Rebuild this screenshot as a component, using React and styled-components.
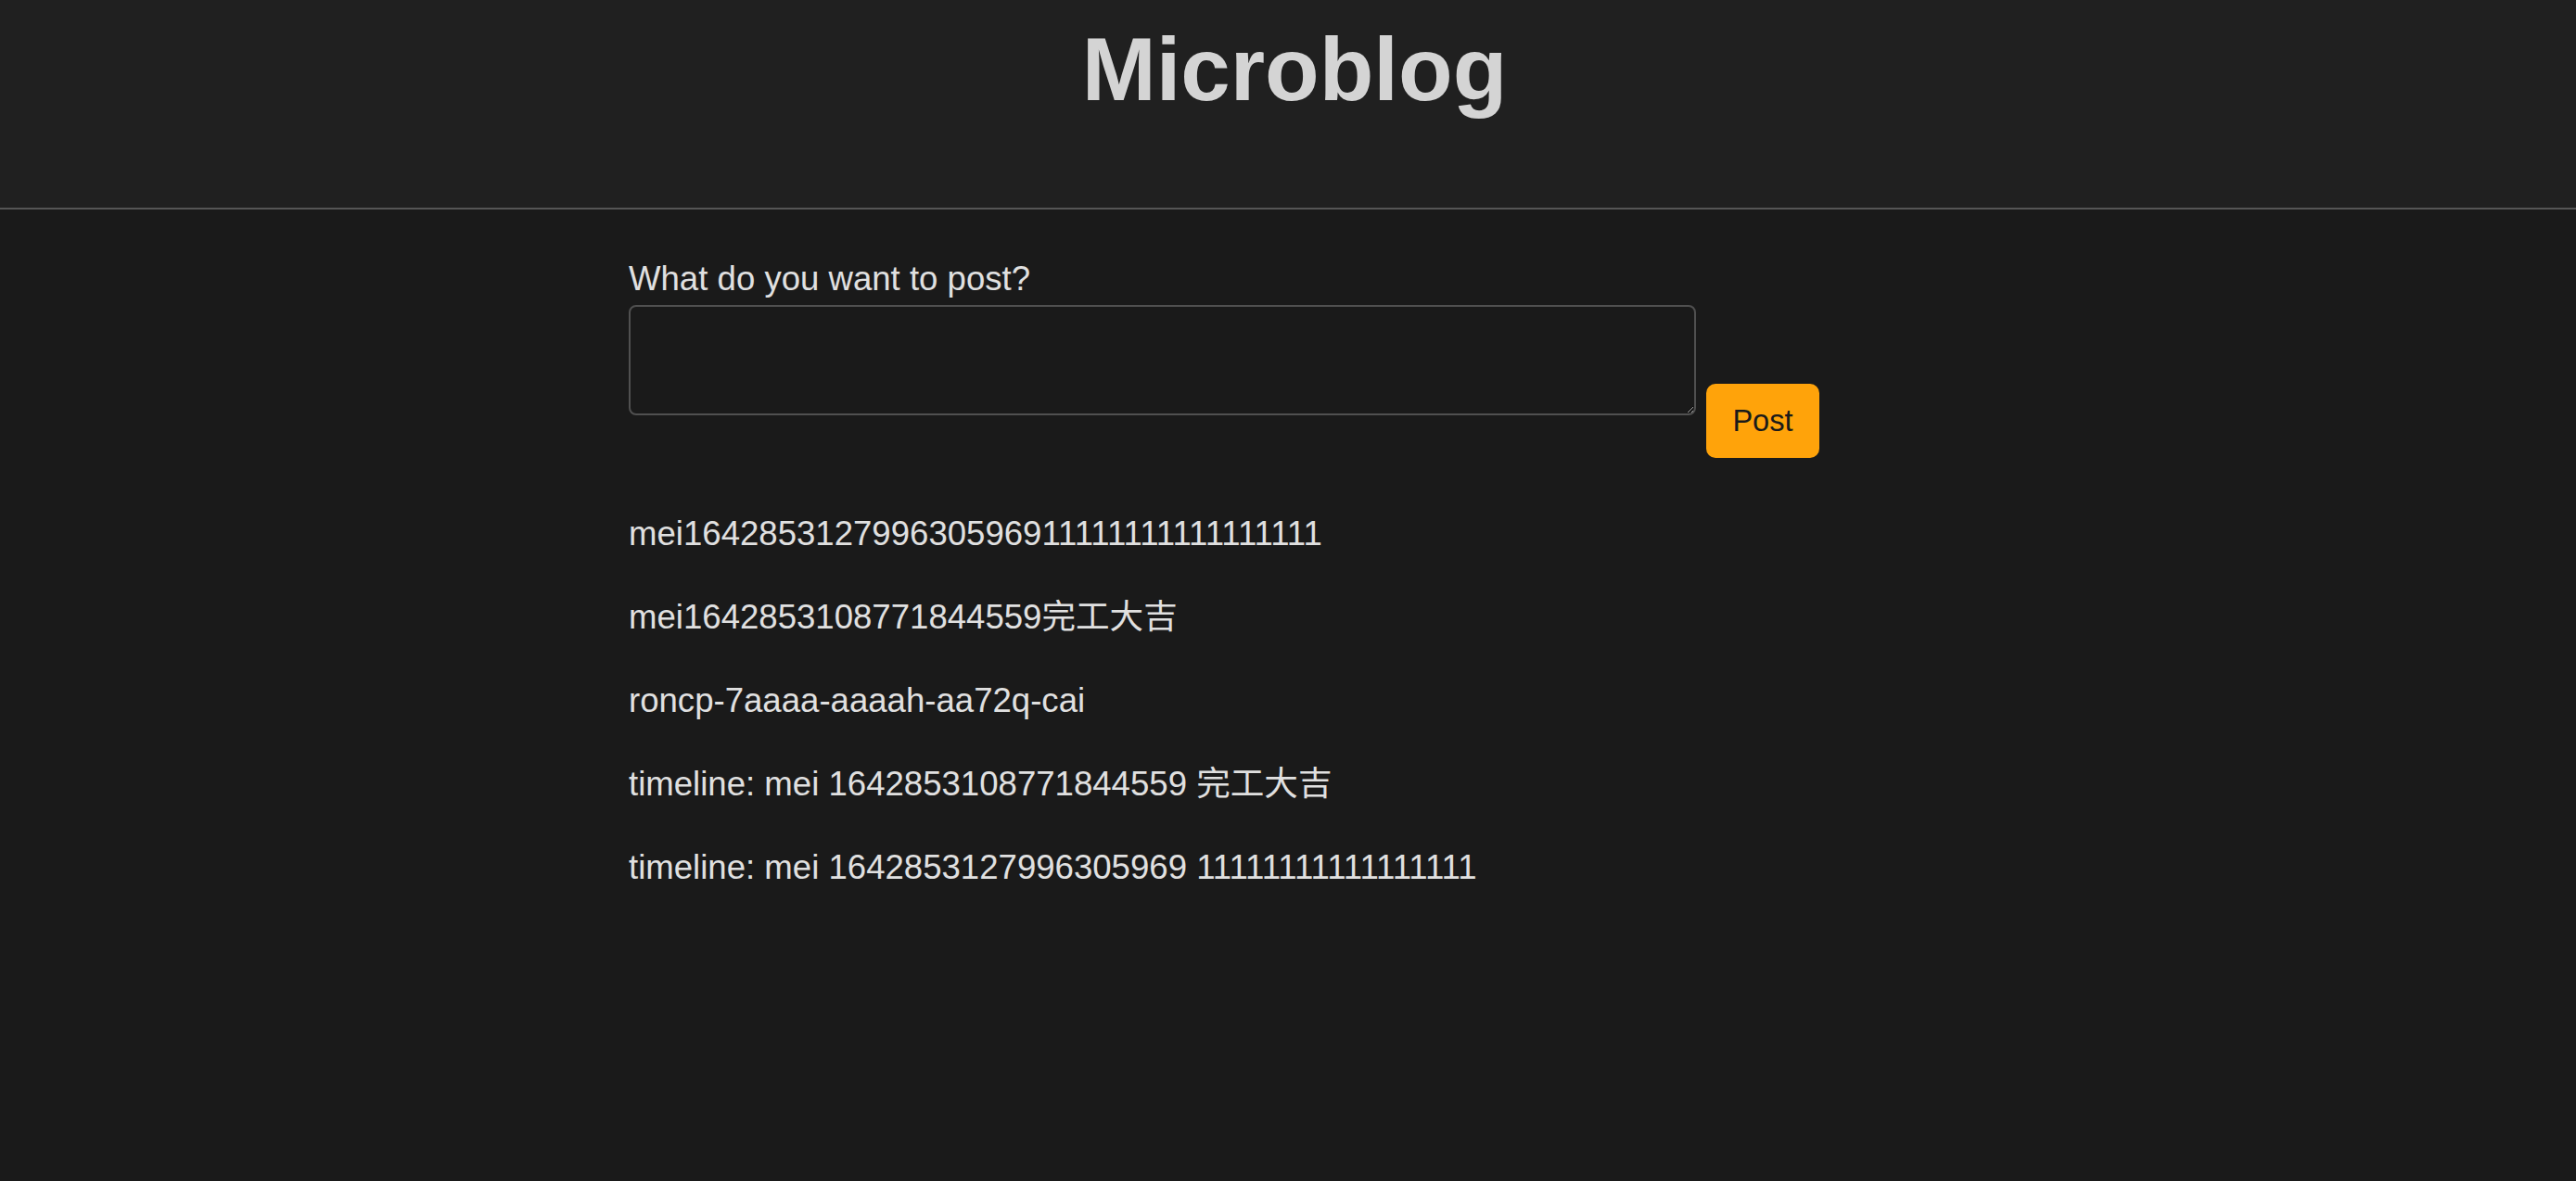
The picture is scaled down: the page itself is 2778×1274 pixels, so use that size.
import React from "react";
import styled, { createGlobalStyle } from "styled-components";

const Global = createGlobalStyle`
  html, body {
    margin: 0;
    padding: 0;
    background: #1a1a1a;
  }
  body {
    font-family: "Liberation Sans", Arial, "Noto Sans CJK SC", sans-serif;
    color: #e0e0e0;
  }
`;

const Header = styled.header`
  height: 224px;
  background: #202020;
  border-bottom: 2px solid #555555;
  display: flex;
  justify-content: center;
  align-items: flex-start;
  padding-left: 14px;
`;

const Title = styled.h1`
  margin: 0;
  padding-top: 20px;
  font-size: 96px;
  font-weight: 700;
  line-height: normal;
  color: #d4d4d4;
`;

const Main = styled.main`
  width: 1422px;
  margin: 0 auto;
  padding-top: 54px;
  display: flex;
  flex-direction: column;
`;

const Form = styled.form`
  display: flex;
  flex-direction: column;
  gap: 7px;
`;

const Label = styled.label`
  font-size: 36.6px;
  line-height: normal;
  color: #e0e0e0;
`;

const Row = styled.div`
  display: flex;
  align-items: flex-end;
  gap: 11px;
`;

const TextArea = styled.textarea`
  box-sizing: border-box;
  width: 1151px;
  height: 119px;
  margin: 0 0 46px 0;
  background: #1a1a1a;
  border: 2px solid #505050;
  border-radius: 8px;
  color: #e0e0e0;
  font-family: inherit;
  font-size: 32px;
  padding: 8px;
  outline: none;
`;

const PostButton = styled.button`
  box-sizing: border-box;
  width: 122px;
  height: 80px;
  background: #ffa30a;
  color: #1a1a1a;
  border: none;
  border-radius: 10px;
  font-family: inherit;
  font-size: 32.6px;
  padding: 0;
  cursor: pointer;
`;

const List = styled.ul`
  list-style: none;
  margin: 55px 0 0 0;
  padding: 0;
  display: flex;
  flex-direction: column;
  gap: 36px;
`;

const Item = styled.li`
  font-size: 36.6px;
  line-height: 54px;
  color: #e0e0e0;
  white-space: nowrap;
`;

const ones = "1".repeat(17);

const posts = [
  `mei1642853127996305969${ones}`,
  "mei1642853108771844559完工大吉",
  "roncp-7aaaa-aaaah-aa72q-cai",
  "timeline: mei 1642853108771844559 完工大吉",
  `timeline: mei 1642853127996305969 ${ones}`,
];

export default function App() {
  return (
    <>
      <Global />
      <Header>
        <Title>Microblog</Title>
      </Header>
      <Main>
        <Form onSubmit={(e) => e.preventDefault()}>
          <Label htmlFor="post">What do you want to post?</Label>
          <Row>
            <TextArea id="post" />
            <PostButton type="submit">Post</PostButton>
          </Row>
        </Form>
        <List>
          {posts.map((p, i) => (
            <Item key={i}>{p}</Item>
          ))}
        </List>
      </Main>
    </>
  );
}
